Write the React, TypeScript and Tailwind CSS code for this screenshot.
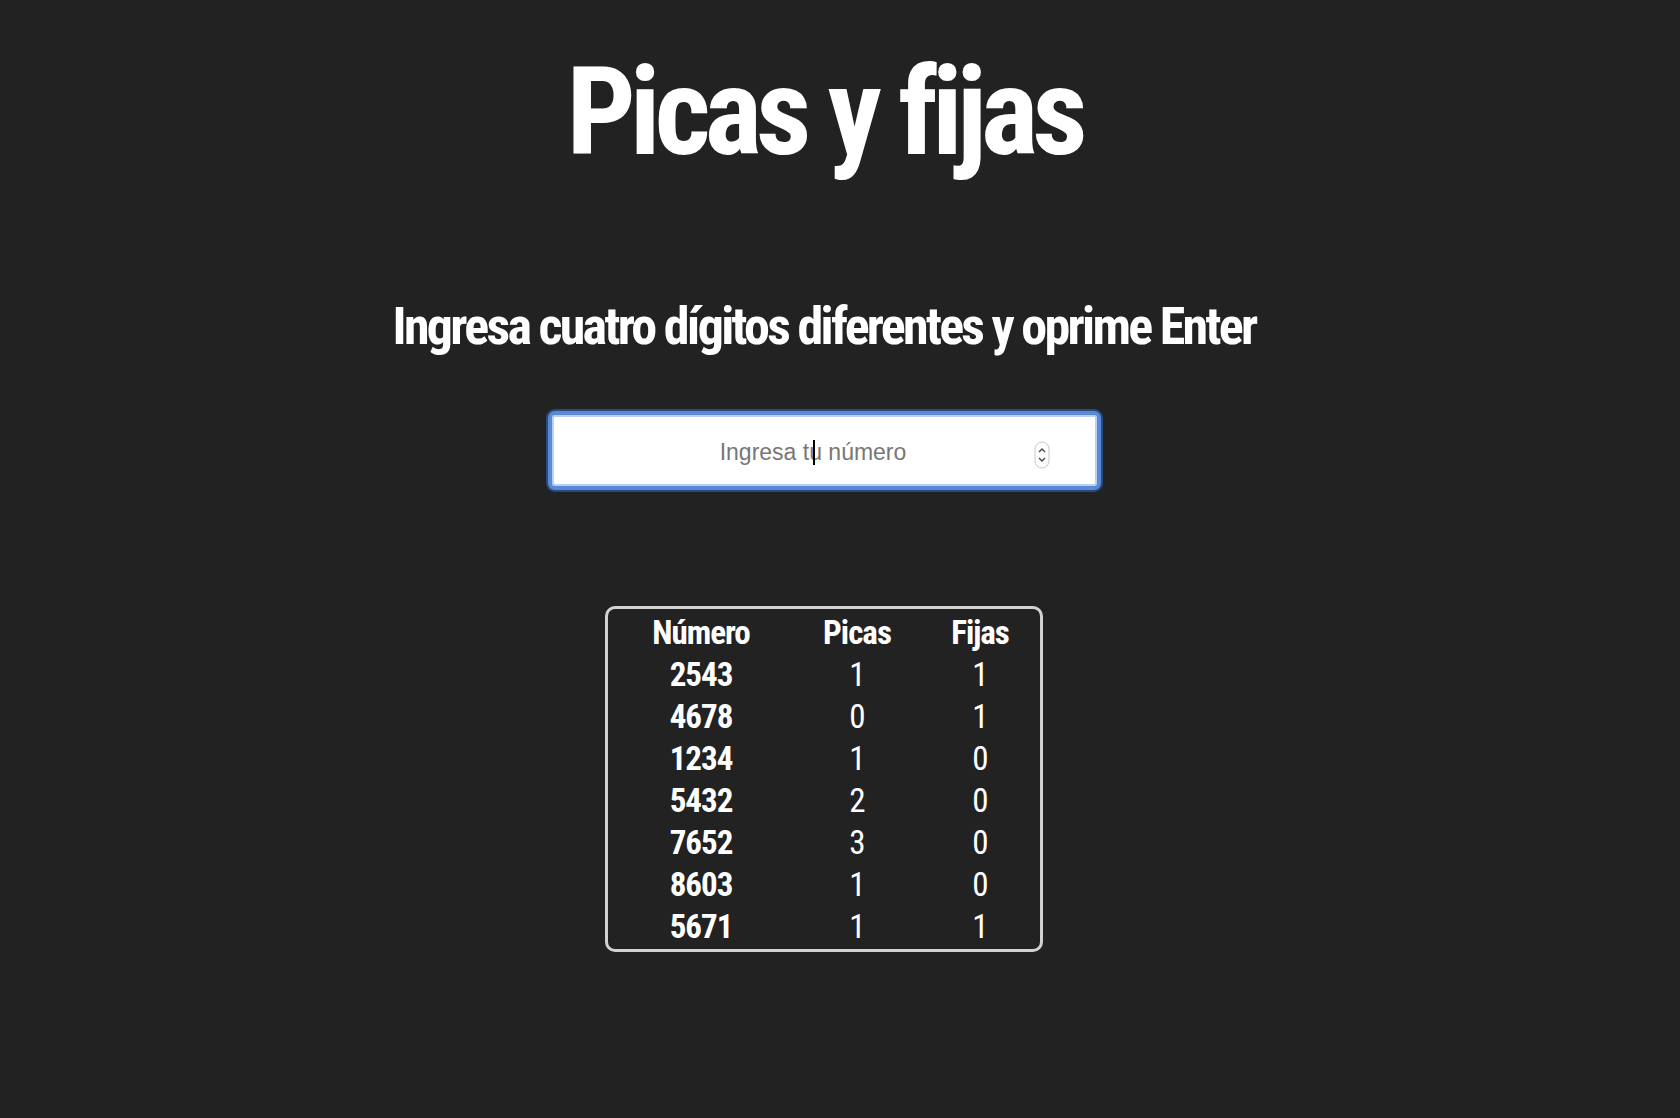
const condensed = { fontFamily: '"Roboto", "Open Sans", sans-serif', fontStretch: "75%" };

const intentos = [
  { numero: "2543", picas: 1, fijas: 1 },
  { numero: "4678", picas: 0, fijas: 1 },
  { numero: "1234", picas: 1, fijas: 0 },
  { numero: "5432", picas: 2, fijas: 0 },
  { numero: "7652", picas: 3, fijas: 0 },
  { numero: "8603", picas: 1, fijas: 0 },
  { numero: "5671", picas: 1, fijas: 1 },
];

function Spinner() {
  return (
    <svg width="16" height="28" viewBox="0 0 16 28" className="absolute right-[47px] top-[26px]">
      <rect x="1" y="1" width="14" height="26" rx="7" fill="white" stroke="#c8c8c8" />
      <path d="M5 11 L8 8 L11 11" fill="none" stroke="#444" strokeWidth="1.3" />
      <path d="M5 17 L8 20 L11 17" fill="none" stroke="#444" strokeWidth="1.3" />
    </svg>
  );
}

export default function App() {
  return (
    <div className="min-h-[1118px] bg-[#222222] text-white flex flex-col items-center pr-[32px]" style={condensed}>
      <h1 className="mt-[52px] text-[122px] leading-[122px] font-bold tracking-[-6px]">Picas y fijas</h1>

      <h2 className="mt-[125px] text-[52px] leading-[56px] font-bold tracking-[-2.7px]">
        Ingresa cuatro dígitos diferentes y oprime Enter
      </h2>

      <div className="relative mt-[56px] w-[553px] h-[79px] rounded-[7px] bg-white border-[4px] border-[#5a8ad6] shadow-[0_0_0_2px_#274a80,inset_0_0_0_2px_#b9d0f2]">
        <input
          type="text"
          placeholder="Ingresa tu número"
          className="w-full h-full bg-transparent pl-[8px] pr-[30px] pt-[3px] text-center text-[23px] text-[#222] placeholder:text-[#777777] outline-none"
          style={{ fontFamily: '"Liberation Sans", Arial, sans-serif', fontStretch: "normal" }}
        />
        <span className="absolute left-[261px] top-[25px] h-[25px] w-[2px] bg-black" />
        <Spinner />
      </div>

      <div className="mt-[116px] w-[438px] rounded-[10px] border-[3px] border-[#d2d2d2] pt-[3px] pb-[1px]">
        <div className="grid grid-cols-[186px_126px_120px] text-[33px] leading-[42px] tracking-[-1px] text-center">
          <div className="font-bold">Número</div>
          <div className="font-bold">Picas</div>
          <div className="font-bold">Fijas</div>
          {intentos.map(i => (
            <div key={i.numero} className="contents">
              <div className="font-bold">{i.numero}</div>
              <div>{i.picas}</div>
              <div>{i.fijas}</div>
            </div>
          ))}
        </div>
      </div>
    </div>
  );
}
